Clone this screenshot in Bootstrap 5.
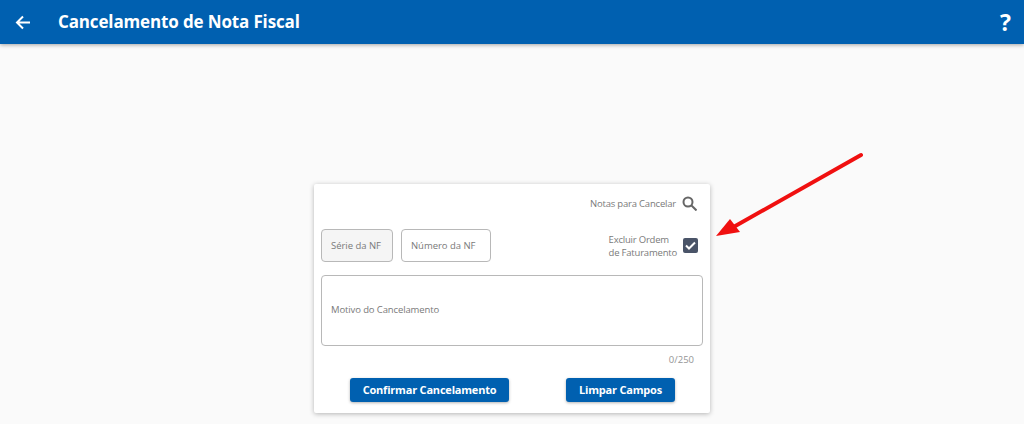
<!DOCTYPE html>
<html lang="pt">
<head>
<meta charset="utf-8">
<title>Cancelamento de Nota Fiscal</title>
<link href="https://cdn.jsdelivr.net/npm/bootstrap@5.3.0/dist/css/bootstrap.min.css" rel="stylesheet">
<style>
html,body{height:424px;overflow:hidden}
body{background:#fafafa;font-family:"Open Sans","Noto Sans",sans-serif;color:#757575;position:relative}
.topbar{height:44px;background:#0060b0;color:#fff;box-shadow:0 1px 4px rgba(0,0,0,.35);padding:0 13px 0 15px}
.topbar-title{font-size:17px;font-weight:700;letter-spacing:-.14px;margin:0 0 0 27px;line-height:44px}
.help-mark{font-size:23px;font-weight:700;line-height:44px}
.stage{height:380px;padding-top:140px}
.panel{width:396px;height:229px;background:#fff;box-shadow:0 1px 5px rgba(0,0,0,.28);border-radius:2px;padding:0 7px}
.small-label{font-size:9.5px;letter-spacing:-.2px;color:#7a7a7a;line-height:13px}
.label-stack{padding-top:2px}
.search-row{height:38px;padding-right:6px}
.search-glyph{margin-left:6px}
.fields-row{height:34px;margin-top:6px}
.field-box{height:33px;border:1px solid #b8b8b8;border-radius:4px;font-size:9.5px;letter-spacing:-.03px;color:#7a7a7a;padding:0 9px;line-height:31px}
.field-serie{width:72px;background:#f5f5f5}
.field-numero{width:90px;margin-left:8px;background:#fff}
.exclude-wrap{padding-right:5px}
.check-box{width:15px;height:15px;background:#4a5468;border-radius:2px;margin-left:6px}
.area-box{height:71px;border:1px solid #b8b8b8;border-radius:4px;margin-top:13px;padding:0 9px;font-size:9.5px;letter-spacing:-.12px;color:#7a7a7a}
.counter{font-size:9.5px;color:#959595;text-align:right;padding-right:9px;margin-top:7px;line-height:13px}
.action-row{margin-top:12px;padding:0 28px 0 29px}
.btn-action{background:#0060b0;color:#fff;font-size:11px;font-weight:700;letter-spacing:-.2px;height:24px;border:0;border-radius:3px;padding:0;box-shadow:0 1px 3px rgba(0,0,0,.3);font-family:inherit}
.btn-confirm{width:159px}
.btn-clear{width:109px}
.arrow-layer{position:absolute;left:0;top:0;pointer-events:none}
</style>
</head>
<body>
<header class="topbar d-flex align-items-center">
  <svg width="16" height="15" viewBox="0 0 16 15" fill="none" stroke="#fff" stroke-width="2"><path d="M15 7.500H2M8 1.500 2 7.500l6 6"/></svg>
  <h1 class="topbar-title flex-grow-1">Cancelamento de Nota Fiscal</h1>
  <span class="help-mark">?</span>
</header>
<main class="stage d-flex justify-content-center">
  <section class="panel">
    <div class="search-row d-flex align-items-center justify-content-end">
      <span class="small-label">Notas para Cancelar</span>
      <svg class="search-glyph" width="15" height="15" viewBox="0 0 15 15" fill="none" stroke="#666" stroke-width="2"><circle cx="6" cy="6" r="4.500"/><path d="m9.500 9.500 5 5"/></svg>
    </div>
    <div class="fields-row d-flex align-items-center">
      <div class="field-box field-serie">Série da NF</div>
      <div class="field-box field-numero">Número da NF</div>
      <div class="exclude-wrap ms-auto d-flex align-items-center">
        <span class="small-label label-stack">Excluir Ordem<br>de Faturamento</span>
        <span class="check-box d-flex align-items-center justify-content-center">
          <svg width="11" height="9" viewBox="0 0 11 9" fill="none" stroke="#fff" stroke-width="2"><path d="m1 4.500 3 3 6-6"/></svg>
        </span>
      </div>
    </div>
    <div class="area-box d-flex align-items-center">Motivo do Cancelamento</div>
    <div class="counter">0/250</div>
    <div class="action-row d-flex justify-content-between">
      <button class="btn-action btn-confirm" type="button">Confirmar Cancelamento</button>
      <button class="btn-action btn-clear" type="button">Limpar Campos</button>
    </div>
  </section>
</main>
<svg class="arrow-layer" width="1024" height="424" viewBox="0 0 1024 424"><path d="M861 155 730 229" stroke="#f01010" stroke-width="4" stroke-linecap="round"/><path d="M716 236 730 219 740 232Z" fill="#f01010"/></svg>
</body>
</html>
